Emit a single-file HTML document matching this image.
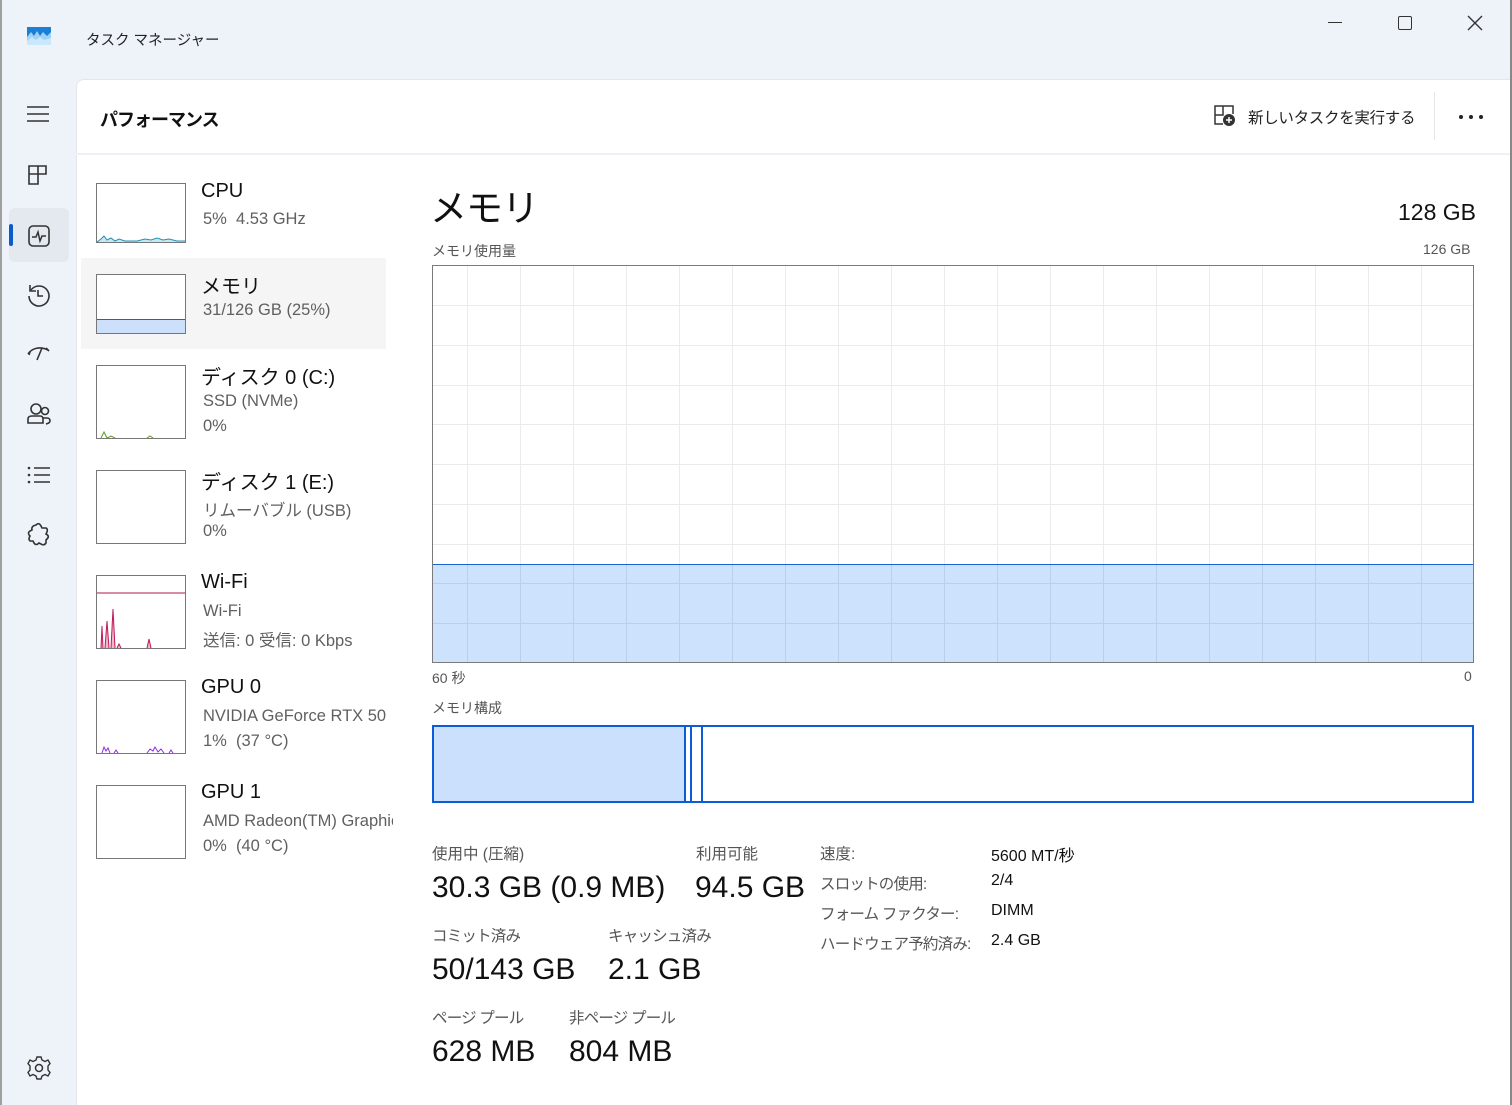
<!DOCTYPE html>
<html><head><meta charset="utf-8"><style>
*{margin:0;padding:0;box-sizing:border-box}
body{width:1512px;height:1105px;overflow:hidden;background:#eef2f9;font-family:"Liberation Sans","Noto Sans CJK JP",sans-serif;position:relative;color:#1a1a1a}
.a{position:absolute;white-space:nowrap}
.main{position:absolute;left:76px;top:79px;width:1436px;height:1026px;background:#fff;border-top-left-radius:8px;border-top:1px solid #e3e6ec;border-left:1px solid #e3e6ec}
.hdr{position:absolute;left:76px;top:153px;width:1436px;height:2px;background:#edf0f4}
.th{position:absolute;left:96px;width:90px;border:1px solid #777;background:#fff;overflow:hidden}
.t1{position:absolute;left:201px;font-size:20px;color:#111;white-space:nowrap}
.t2{position:absolute;left:203px;font-size:16.5px;color:#606060;white-space:nowrap}
.lab{font-size:14px;color:#555}
.big{font-size:30px;color:#111}
.ic{position:absolute;left:26px}
.v{font-size:16px;color:#111}
</style></head><body>
<div class="a" style="left:0;top:0;width:2px;height:1105px;background:#a0a0a0"></div>
<svg class="a" style="left:27px;top:27px" width="24" height="18" viewBox="0 0 24 18"><rect width="24" height="18" fill="#9fd3f5"/><path d="M0 10 L4 5 L7 9 L10 4 L13 9 L16 5 L20 9 L24 5 L24 0 L0 0Z" fill="#1a7fd6"/><path d="M0 14 L5 10 L9 13 L13 10 L17 13 L24 11 L24 18 L0 18Z" fill="#c9e8fb"/></svg>
<div class="a" style="left:86px;top:29px;font-size:14.5px;color:#222">タスク マネージャー</div>
<div class="a" style="left:1328px;top:22px;width:14px;height:1px;background:#333"></div>
<div class="a" style="left:1398px;top:16px;width:14px;height:14px;border:1.5px solid #333;border-radius:2px"></div>
<svg class="a" style="left:1467px;top:15px" width="16" height="16"><path d="M1 1L15 15M15 1L1 15" stroke="#333" stroke-width="1.4"/></svg>
<div class="main"></div>
<div class="hdr"></div>
<svg class="ic" style="top:104px" width="24" height="20"><path d="M1 3H23M1 10H23M1 17H23" stroke="#333" stroke-width="1.5"/></svg>
<svg class="ic" style="top:163px" width="24" height="24"><path d="M3 3H20V11H12V21H3ZM3 11H12M12 3V11" fill="none" stroke="#333" stroke-width="1.6"/></svg>
<div class="a" style="left:9px;top:208px;width:60px;height:54px;background:#e4e8ef;border-radius:6px"></div>
<div class="a" style="left:9px;top:224px;width:4px;height:22px;background:#0a5cc8;border-radius:2px"></div>
<svg class="ic" style="top:223px" width="26" height="26"><rect x="3" y="3" width="20" height="20" rx="4" fill="none" stroke="#333" stroke-width="1.6"/><path d="M6 14H10L12 9L14 18L16 13H20" fill="none" stroke="#333" stroke-width="1.5"/></svg>
<svg class="ic" style="top:282px" width="26" height="26"><path d="M5 8A10 10 0 1 1 3 14" fill="none" stroke="#333" stroke-width="1.6"/><path d="M4 3V9H10" fill="none" stroke="#333" stroke-width="1.6"/><path d="M12 8V14H17" fill="none" stroke="#333" stroke-width="1.6"/></svg>
<svg class="ic" style="top:342px" width="26" height="22"><path d="M2 12C6 6 14 4 22 8M11 18L16 6M4 10L3 13M20 6L23 9" fill="none" stroke="#333" stroke-width="1.6"/></svg>
<svg class="ic" style="top:401px" width="26" height="26"><circle cx="10" cy="8" r="5" fill="none" stroke="#333" stroke-width="1.6"/><circle cx="19" cy="10" r="3.5" fill="none" stroke="#333" stroke-width="1.6"/><path d="M2 22V18Q2 15 6 15H14Q17 15 17 18V22ZM17 17H21Q24 17 24 20Q24 22 20 23" fill="none" stroke="#333" stroke-width="1.6"/></svg>
<svg class="ic" style="top:464px" width="26" height="22"><path d="M8 4H24M8 11H24M8 18H24" stroke="#333" stroke-width="1.6"/><circle cx="3" cy="4" r="1.3" fill="#333"/><circle cx="3" cy="11" r="1.3" fill="#333"/><circle cx="3" cy="18" r="1.3" fill="#333"/></svg>
<svg class="ic" style="top:522px" width="26" height="26"><path d="M10 3Q13 0 15 4L16 6H20Q22 7 21 10L20 12Q24 14 21 17L20 18V21Q18 24 15 22L13 21Q10 24 8 21L7 19H4Q2 17 4 14Q1 11 4 9L6 8Q5 4 10 3Z" fill="none" stroke="#333" stroke-width="1.6"/></svg>
<svg class="ic" style="top:1055px" width="26" height="26"><circle cx="13" cy="13" r="3.5" fill="none" stroke="#333" stroke-width="1.5"/><path d="M11 2H15L16 5L19 6.5L22 5L24 8.5L22 11V15L24 17.5L22 21L19 19.5L16 21L15 24H11L10 21L7 19.5L4 21L2 17.5L4 15V11L2 8.5L4 5L7 6.5L10 5Z" fill="none" stroke="#333" stroke-width="1.4"/></svg>
<div class="a" style="left:100px;top:106px;font-size:18px;font-weight:bold;color:#111;letter-spacing:-1px">パフォーマンス</div>
<svg class="a" style="left:1213px;top:104px" width="24" height="24"><path d="M10 20H2V2H20V10M2 11H10V2" fill="none" stroke="#333" stroke-width="1.5"/><circle cx="16" cy="16" r="6" fill="#333"/><path d="M16 13V19M13 16H19" stroke="#fff" stroke-width="1.5"/></svg>
<div class="a" style="left:1248px;top:106px;font-size:15.5px;color:#222;letter-spacing:-0.3px">新しいタスクを実行する</div>
<div class="a" style="left:1434px;top:92px;width:1px;height:48px;background:#e5e5e5"></div>
<svg class="a" style="left:1458px;top:113px" width="26" height="8"><circle cx="3" cy="4" r="2" fill="#222"/><circle cx="13" cy="4" r="2" fill="#222"/><circle cx="23" cy="4" r="2" fill="#222"/></svg>
<div class="a" style="left:81px;top:258px;width:305px;height:91px;background:#f5f5f5"></div>
<div class="th" style="top:183px;height:60px"><svg width="90" height="60"><path d="M0 58L4 55L7 52L10 56L14 54L18 57L22 55L28 57L40 57L48 55L54 56L60 54L66 56L72 55L80 57L90 57V60H0Z" fill="#c6e8f0" stroke="#2191b7" stroke-width="1"/></svg></div>
<div class="t1" style="top:180px">CPU</div><div class="t2" style="top:210px">5%&nbsp; 4.53 GHz</div>
<div class="th" style="top:274px;height:60px"><div style="position:absolute;left:0;right:0;bottom:0;height:14px;background:#cce0fb;border-top:1px solid #1565d8"></div></div>
<div class="t1" style="top:270px">メモリ</div><div class="t2" style="top:301px">31/126 GB (25%)</div>
<div class="th" style="top:365px;height:74px"><svg width="90" height="74"><path d="M4 72L7 66L10 72L14 70L18 72M50 72L53 70L56 72" fill="none" stroke="#5a9a20" stroke-width="1"/></svg></div>
<div class="t1" style="top:361px">ディスク 0 (C:)</div><div class="t2" style="top:392px">SSD (NVMe)</div><div class="t2" style="top:417px">0%</div>
<div class="th" style="top:470px;height:74px"></div>
<div class="t1" style="top:466px">ディスク 1 (E:)</div><div class="t2" style="top:497px">リムーバブル (USB)</div><div class="t2" style="top:522px">0%</div>
<div class="th" style="top:575px;height:74px"><svg width="90" height="74"><path d="M0 17H90" stroke="#b0174f" stroke-width="1"/><path d="M4 72L5 50L6 72M8 72L10 45L12 72M14 72L16 33L18 72M20 72L22 68L24 72M50 72L52 63L54 72" fill="#f0b8cc" stroke="#c0185a" stroke-width="1"/></svg></div>
<div class="t1" style="top:571px">Wi-Fi</div><div class="t2" style="top:602px">Wi-Fi</div><div class="t2" style="top:627px">送信: 0 受信: 0 Kbps</div>
<div class="th" style="top:680px;height:74px"><svg width="90" height="74"><path d="M5 72L7 66L9 70L11 67L13 72M17 72L19 69L21 72M50 72L53 68L56 70L58 66L61 71L64 68L67 72M72 72L74 69L76 72" fill="none" stroke="#8c2be2" stroke-width="1"/></svg></div>
<div class="t1" style="top:676px">GPU 0</div><div class="t2" style="top:707px">NVIDIA GeForce RTX 50</div><div class="t2" style="top:732px">1%&nbsp; (37 °C)</div>
<div class="th" style="top:785px;height:74px"></div>
<div class="t1" style="top:781px">GPU 1</div><div class="t2" style="top:812px;width:190px;overflow:hidden">AMD Radeon(TM) Graphics</div><div class="t2" style="top:837px">0%&nbsp; (40 °C)</div>
<div class="a" style="left:430px;top:178px;font-size:37px;color:#111;letter-spacing:-1px">メモリ</div>
<div class="a" style="left:1398px;top:199px;font-size:23px;color:#111">128 GB</div>
<div class="a lab" style="left:432px;top:241px">メモリ使用量</div>
<div class="a lab" style="left:1423px;top:241px">126 GB</div>
<svg class="a" style="left:432px;top:265px" width="1042" height="398">
<g stroke="#ebebeb" stroke-width="1">
<path d="M35.5 0V398M88.5 0V398M141.5 0V398M194.5 0V398M247.5 0V398M300.5 0V398M353.5 0V398M406.5 0V398M459.5 0V398M512.5 0V398M565.5 0V398M618.5 0V398M671.5 0V398M724.5 0V398M777.5 0V398M830.5 0V398M883.5 0V398M936.5 0V398M989.5 0V398"/>
<path d="M0 40.5H1042M0 80.5H1042M0 120.5H1042M0 159.5H1042M0 199.5H1042M0 239.5H1042M0 279.5H1042M0 318.5H1042M0 358.5H1042"/>
</g>
<rect x="0.5" y="299.5" width="1041" height="98" fill="#cae0fc" fill-opacity="0.95" stroke="#1565d8"/>
<g stroke="#b8cfee" stroke-width="1">
<path d="M35.5 300V398M88.5 300V398M141.5 300V398M194.5 300V398M247.5 300V398M300.5 300V398M353.5 300V398M406.5 300V398M459.5 300V398M512.5 300V398M565.5 300V398M618.5 300V398M671.5 300V398M724.5 300V398M777.5 300V398M830.5 300V398M883.5 300V398M936.5 300V398M989.5 300V398M1 318.5H1041M1 358.5H1041"/>
</g>
<rect x="0.5" y="0.5" width="1041" height="397" fill="none" stroke="#7a7a7a"/>
<path d="M1 299.5H1041" stroke="#1565d8"/>
</svg>
<div class="a lab" style="left:432px;top:668px">60 秒</div>
<div class="a lab" style="left:1464px;top:668px">0</div>
<div class="a lab" style="left:432px;top:698px">メモリ構成</div>
<div class="a" style="left:432px;top:725px;width:1042px;height:78px;border:2px solid #0a5cd8;background:#fff"></div>
<div class="a" style="left:434px;top:727px;width:252px;height:74px;background:#cae0fc;border-right:2px solid #0a5cd8"></div>
<div class="a" style="left:690px;top:727px;width:2px;height:74px;background:#0a5cd8"></div>
<div class="a" style="left:701px;top:727px;width:2px;height:74px;background:#0a5cd8"></div>
<div class="a lab" style="left:432px;top:842px;font-size:15.5px">使用中 (圧縮)</div>
<div class="a big" style="left:432px;top:871px">30.3 GB (0.9 MB)</div>
<div class="a lab" style="left:696px;top:842px;font-size:15.5px">利用可能</div>
<div class="a big" style="left:695px;top:871px">94.5 GB</div>
<div class="a lab" style="left:432px;top:924px;font-size:15.5px;letter-spacing:-0.8px">コミット済み</div>
<div class="a big" style="left:432px;top:953px">50/143 GB</div>
<div class="a lab" style="left:608px;top:924px;font-size:15.5px;letter-spacing:-0.8px">キャッシュ済み</div>
<div class="a big" style="left:608px;top:953px">2.1 GB</div>
<div class="a lab" style="left:432px;top:1006px;font-size:15.5px;letter-spacing:-0.8px">ページ プール</div>
<div class="a big" style="left:432px;top:1035px">628 MB</div>
<div class="a lab" style="left:569px;top:1006px;font-size:15.5px;letter-spacing:-0.8px">非ページ プール</div>
<div class="a big" style="left:569px;top:1035px">804 MB</div>
<div class="a lab" style="left:820px;top:842px;font-size:15.5px">速度:</div><div class="a v" style="left:991px;top:842px">5600 MT/秒</div>
<div class="a lab" style="left:820px;top:872px;font-size:15.5px;letter-spacing:-0.8px">スロットの使用:</div><div class="a v" style="left:991px;top:872px">2/4</div>
<div class="a lab" style="left:820px;top:902px;font-size:15.5px;letter-spacing:-0.8px">フォーム ファクター:</div><div class="a v" style="left:991px;top:902px">DIMM</div>
<div class="a lab" style="left:820px;top:932px;font-size:15.5px;letter-spacing:-0.8px">ハードウェア予約済み:</div><div class="a v" style="left:991px;top:932px">2.4 GB</div>
<div class="a" style="left:1510px;top:0;width:2px;height:1105px;background:#888"></div>
</body></html>
